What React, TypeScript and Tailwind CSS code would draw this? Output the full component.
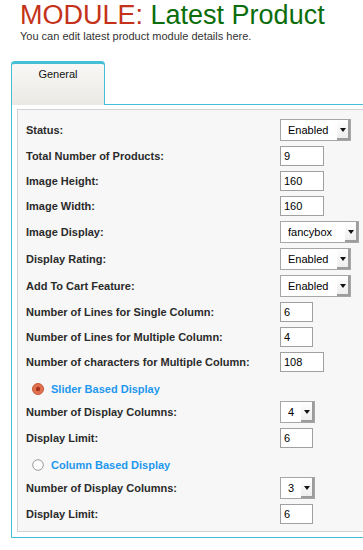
import React from "react";

type Row =
  | { kind: "select"; label: string; value: string; width: number }
  | { kind: "input"; label: string; value: string; width: number }
  | { kind: "radio"; label: string; checked: boolean };

const rows: Row[] = [
  { kind: "select", label: "Status:", value: "Enabled", width: 71 },
  { kind: "input", label: "Total Number of Products:", value: "9", width: 44 },
  { kind: "input", label: "Image Height:", value: "160", width: 44 },
  { kind: "input", label: "Image Width:", value: "160", width: 44 },
  { kind: "select", label: "Image Display:", value: "fancybox", width: 79 },
  { kind: "select", label: "Display Rating:", value: "Enabled", width: 71 },
  { kind: "select", label: "Add To Cart Feature:", value: "Enabled", width: 71 },
  { kind: "input", label: "Number of Lines for Single Column:", value: "6", width: 33 },
  { kind: "input", label: "Number of Lines for Multiple Column:", value: "4", width: 33 },
  { kind: "input", label: "Number of characters for Multiple Column:", value: "108", width: 44 },
  { kind: "radio", label: "Slider Based Display", checked: true },
  { kind: "select", label: "Number of Display Columns:", value: "4", width: 35 },
  { kind: "input", label: "Display Limit:", value: "6", width: 33 },
  { kind: "radio", label: "Column Based Display", checked: false },
  { kind: "select", label: "Number of Display Columns:", value: "3", width: 35 },
  { kind: "input", label: "Display Limit:", value: "6", width: 33 },
];

function FakeSelect({ value, width }: { value: string; width: number }) {
  return (
    <div
      className="flex h-[22px] items-stretch border border-[#a6a6a6] bg-white text-[11px] text-black"
      style={{ width }}
    >
      <span className="flex flex-1 items-center pl-[7px] leading-none">{value}</span>
      <span className="flex w-[13px] items-center justify-center bg-gradient-to-b from-white to-[#ececec] shadow-[inset_-2px_-2px_0_#9c9c9c]">
        <svg width="6" height="4" viewBox="0 0 6 4" className="-mt-px -ml-px">
          <path d="M0 0h6L3 4z" fill="#111" />
        </svg>
      </span>
    </div>
  );
}

function FakeInput({ value, width }: { value: string; width: number }) {
  return (
    <div
      className="flex h-[20px] items-center border border-[#a0a0a0] bg-white pl-[3px] text-[11px] text-black"
      style={{ width }}
    >
      {value}
    </div>
  );
}

function Radio({ checked }: { checked: boolean }) {
  if (checked) {
    return (
      <svg width="12" height="12" viewBox="0 0 12 12">
        <circle cx="6" cy="6" r="5.5" fill="#e0714f" stroke="#c4593b" />
        <circle cx="6" cy="6" r="2.2" fill="#a8321c" />
      </svg>
    );
  }
  return (
    <svg width="12" height="12" viewBox="0 0 12 12">
      <circle cx="6" cy="6" r="5.3" fill="#fff" stroke="#9a9a9a" />
    </svg>
  );
}

export default function App() {
  return (
    <div className="h-[550px] w-[363px] overflow-hidden bg-white font-['Liberation_Sans',Arial,sans-serif]">
      <div className="px-[20px] pt-[2px]">
        <h1 className="text-[27px] leading-[27px] font-normal">
          <span className="text-[#c4321a]">MODULE:</span>{" "}
          <span className="text-[#0b6d0b]">Latest Product</span>
        </h1>
        <p className="mt-px text-[11px] leading-[13px] text-[#333]">
          You can edit latest product module details here.
        </p>
      </div>

      <div className="ml-[11px] mt-[18px]">
        <div className="relative z-10 -mb-px h-[44px] w-[94px] rounded-t-[4px] border-x border-t-[3px] border-[#45bfd6] bg-gradient-to-b from-[#f9f8f6] to-[#ebe9e4] pt-[4px] text-center text-[11px] leading-[13px] text-[#111]">
          General
        </div>

        <div className="w-[360px] border border-[#45bfd6] bg-white px-[5px] pt-[4px] pb-[5px]">
          <div className="flex flex-col gap-[5px] border border-[#d2d2d2] bg-[#f7f7f7] pt-[9px] pb-[7px] pl-[8px]">
            {rows.map((row, i) =>
              row.kind === "radio" ? (
                <div key={i} className="flex h-[19px] items-center gap-[7px] pt-[5px] pl-[6px]">
                  <Radio checked={row.checked} />
                  <span className="text-[11px] font-bold text-[#1e98ee]">{row.label}</span>
                </div>
              ) : (
                <div key={i} className="flex items-center">
                  <span className="w-[254px] text-[11px] font-bold text-[#2b2b2b]">{row.label}</span>
                  {row.kind === "select" ? (
                    <FakeSelect value={row.value} width={row.width} />
                  ) : (
                    <FakeInput value={row.value} width={row.width} />
                  )}
                </div>
              )
            )}
          </div>
        </div>
      </div>
    </div>
  );
}
